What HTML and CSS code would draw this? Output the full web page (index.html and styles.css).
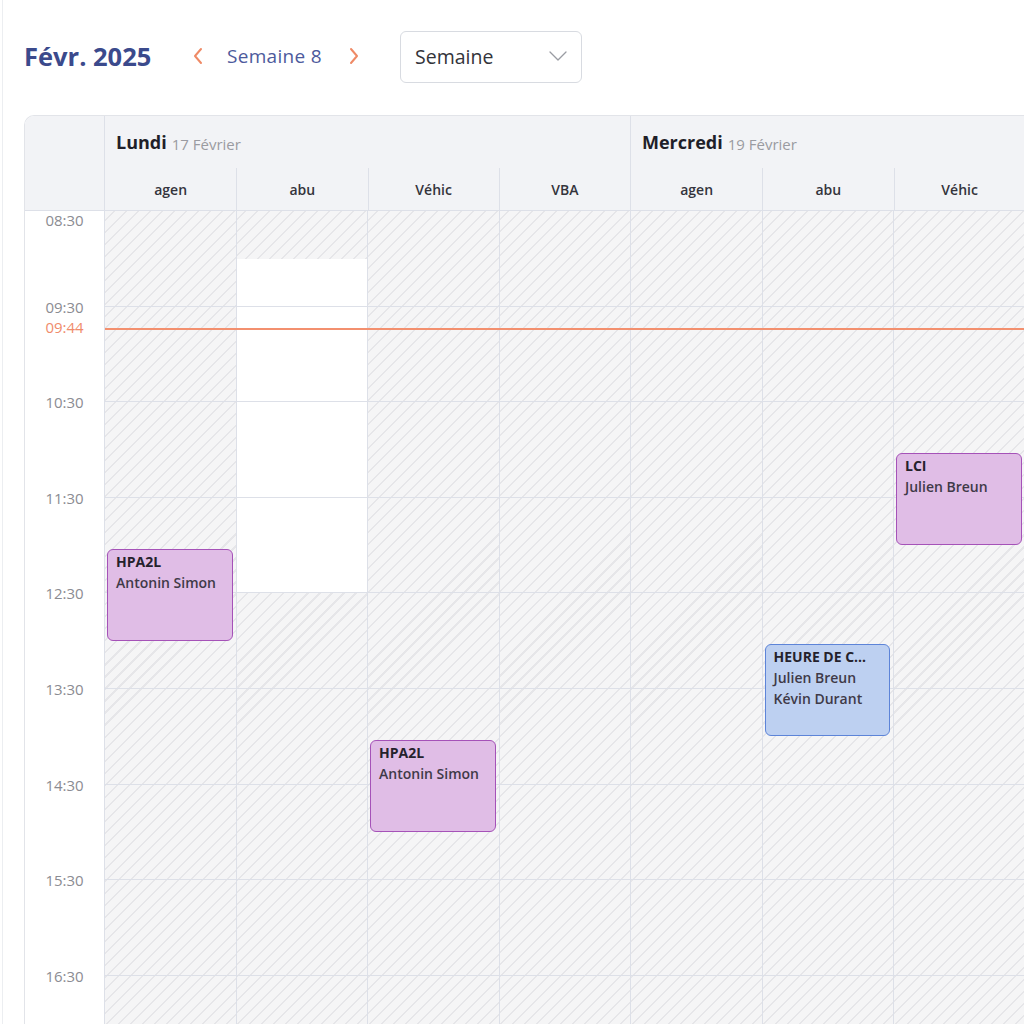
FILE: index.html
```html
<!DOCTYPE html>
<html lang="fr">
<head>
<meta charset="utf-8">
<title>Planning</title>
<link rel="stylesheet" href="styles.css">
</head>
<body>
<div class="app">
  <header class="toolbar">
    <h1 class="month">Févr. 2025</h1>
    <nav class="week-nav">
      <button class="nav-btn" aria-label="Semaine précédente">
        <svg width="12" height="18" viewBox="0 0 12 18"><polyline points="9,2 3,9 9,16" fill="none" stroke="#ef8a66" stroke-width="2" stroke-linecap="round" stroke-linejoin="round"/></svg>
      </button>
      <span class="week-label">Semaine 8</span>
      <button class="nav-btn" aria-label="Semaine suivante">
        <svg width="12" height="18" viewBox="0 0 12 18"><polyline points="3,2 9,9 3,16" fill="none" stroke="#ef8a66" stroke-width="2" stroke-linecap="round" stroke-linejoin="round"/></svg>
      </button>
    </nav>
    <div class="select">
      <span>Semaine</span>
      <svg width="18" height="10" viewBox="0 0 18 10"><polyline points="1,1 9,9 17,1" fill="none" stroke="#9a9ca3" stroke-width="1.3" stroke-linecap="round" stroke-linejoin="round"/></svg>
    </div>
  </header>

  <section class="calendar">
    <div class="cal-head">
      <div class="corner"></div>
      <div class="day-head">
        <div class="day-title"><strong>Lundi</strong> <span>17 Février</span></div>
        <div class="sub-row">
          <div class="sub">agen</div><div class="sub">abu</div><div class="sub">Véhic</div><div class="sub">VBA</div>
        </div>
      </div>
      <div class="day-head">
        <div class="day-title"><strong>Mercredi</strong> <span>19 Février</span></div>
        <div class="sub-row">
          <div class="sub">agen</div><div class="sub">abu</div><div class="sub">Véhic</div><div class="sub"></div>
        </div>
      </div>
    </div>

    <div class="cal-body">
      <div class="times">
        <div class="tslot first"><span class="tlabel">08:30</span></div>
        <div class="tslot"><span class="tlabel">09:30</span></div>
        <div class="tslot"><span class="tlabel">10:30</span></div>
        <div class="tslot"><span class="tlabel">11:30</span></div>
        <div class="tslot"><span class="tlabel">12:30</span></div>
        <div class="tslot"><span class="tlabel">13:30</span></div>
        <div class="tslot"><span class="tlabel">14:30</span></div>
        <div class="tslot"><span class="tlabel">15:30</span></div>
        <div class="tslot"><span class="tlabel">16:30</span></div>
        <span class="now-label">09:44</span>
      </div>

      <!-- Lundi agen -->
      <div class="col">
        <div class="slots"><i></i><i></i><i></i><i></i><i></i><i></i><i></i><i></i><i></i></div>
        <div class="event purple" style="top:337.6px">
          <b>HPA2L</b><span>Antonin Simon</span>
        </div>
      </div>
      <!-- Lundi abu -->
      <div class="col">
        <div class="avail" style="top:47.8px;height:334.6px"></div>
        <div class="slots"><i></i><i></i><i></i><i></i><i></i><i></i><i></i><i></i><i></i></div>
      </div>
      <!-- Lundi Véhic -->
      <div class="col">
        <div class="slots"><i></i><i></i><i></i><i></i><i></i><i></i><i></i><i></i><i></i></div>
        <div class="event purple" style="top:528.8px">
          <b>HPA2L</b><span>Antonin Simon</span>
        </div>
      </div>
      <!-- Lundi VBA -->
      <div class="col">
        <div class="slots"><i></i><i></i><i></i><i></i><i></i><i></i><i></i><i></i><i></i></div>
      </div>
      <!-- Mercredi agen -->
      <div class="col">
        <div class="slots"><i></i><i></i><i></i><i></i><i></i><i></i><i></i><i></i><i></i></div>
      </div>
      <!-- Mercredi abu -->
      <div class="col">
        <div class="slots"><i></i><i></i><i></i><i></i><i></i><i></i><i></i><i></i><i></i></div>
        <div class="event blue" style="top:433.2px">
          <b>HEURE DE C…</b><span>Julien Breun</span><span>Kévin Durant</span>
        </div>
      </div>
      <!-- Mercredi Véhic -->
      <div class="col">
        <div class="slots"><i></i><i></i><i></i><i></i><i></i><i></i><i></i><i></i><i></i></div>
        <div class="event purple" style="top:242px">
          <b>LCI</b><span>Julien Breun</span>
        </div>
      </div>
      <!-- Mercredi (suite) -->
      <div class="col">
        <div class="slots"><i></i><i></i><i></i><i></i><i></i><i></i><i></i><i></i><i></i></div>
      </div>

      <div class="now-line"></div>
    </div>
  </section>
</div>
</body>
</html>
```

FILE: styles.css
```css
* { box-sizing: border-box; }
html, body { margin: 0; padding: 0; background: #fff; }
body {
  font-family: "Open Sans", "Noto Sans", "Liberation Sans", sans-serif;
  color: #2b2b35;
}
.app {
  margin-left: 2px;
  border-left: 1px solid #eceef1;
  padding-left: 21px;
  height: 1024px;
  overflow: hidden;
}

/* toolbar */
.toolbar {
  display: flex;
  align-items: center;
  height: 52px;
  margin-top: 31px;
}
.month {
  margin: 0 0 2px 0;
  font-size: 25.5px;
  font-weight: 700;
  color: #3b4a8c;
  width: 168px;
}
.week-nav {
  display: flex;
  align-items: center;
  width: 208px;
  margin-bottom: 2px;
}
.nav-btn {
  background: none;
  border: 0;
  padding: 0;
  width: 12px;
  height: 18px;
  display: flex;
}
.week-label {
  font-size: 19px;
  font-weight: 500;
  letter-spacing: 0.3px;
  color: #4d5a9c;
  margin: 0 18px 0 23px;
  width: 103px;
  white-space: nowrap;
}
.select {
  width: 182px;
  height: 52px;
  border: 1px solid #d8dbe1;
  border-radius: 6px;
  display: flex;
  align-items: center;
  justify-content: space-between;
  padding: 0 14px 2px 14px;
  font-size: 19.5px;
  font-weight: 500;
  color: #33343a;
}

/* calendar */
.calendar {
  margin-top: 32px;
  width: 1200px;
  border: 1px solid #e2e4e9;
  border-right: 0;
  border-radius: 10px 0 0 0;
  overflow: hidden;
}
.cal-head {
  display: grid;
  grid-template-columns: 80px 526px 526px;
  background: #f2f3f6;
  height: 95px;
  border-bottom: 1px solid #dde0e8;
}
.corner { border-right: 1px solid #dde0e8; }
.day-head {
  border-right: 1px solid #dde0e8;
  display: flex;
  flex-direction: column;
}
.day-title {
  height: 52px;
  display: flex;
  align-items: center;
  padding-left: 11px;
  gap: 5px;
}
.day-title strong { font-size: 18px; font-weight: 700; color: #1f1f29; }
.day-title span { font-size: 15px; color: #9a9ba1; padding-top: 3px; }
.sub-row {
  flex: 1;
  display: grid;
  grid-template-columns: repeat(4, 1fr);
}
.sub {
  display: flex;
  align-items: center;
  justify-content: center;
  font-size: 14px;
  font-weight: 600;
  color: #34343c;
  border-left: 1px solid #dde0e8;
}
.sub:first-child { border-left: 0; }

.cal-body {
  position: relative;
  display: grid;
  grid-template-columns: 80px repeat(8, 131.5px);
}
.times {
  position: relative;
  border-right: 1px solid #dde0e8;
  background: #fff;
}
.tslot {
  height: 95.6px;
  display: flex;
  justify-content: center;
  align-items: flex-start;
}
.tlabel {
  font-size: 15px;
  line-height: 18px;
  color: #8b8c92;
  margin-top: -9px;
}
.tslot.first .tlabel { margin-top: 0; }
.now-label {
  position: absolute;
  left: 0;
  width: 100%;
  top: 107px;
  text-align: center;
  font-size: 15px;
  line-height: 18px;
  color: #f08c6c;
}
.now-line {
  position: absolute;
  left: 80px;
  right: 0;
  top: 117px;
  height: 2px;
  background: #f3906f;
  z-index: 3;
}

.col {
  position: relative;
  border-right: 1px solid #dde0e8;
  background-color: #f4f4f5;
  background-image: repeating-linear-gradient(-45deg, #f5f5f6 0, #f5f5f6 5px, #e6e6e9 5px, #e6e6e9 6.5px, #f5f5f6 6.5px, #f5f5f6 8.5px);
}
.avail {
  position: absolute;
  left: 0;
  right: 0;
  background: #fff;
  z-index: 0;
}
.slots { position: relative; z-index: 1; }
.slots i {
  display: block;
  height: 95.6px;
  border-bottom: 1px solid #dde0e8;
}

.event {
  position: absolute;
  left: 2px;
  right: 3px;
  height: 92px;
  z-index: 2;
  border-radius: 6px;
  padding: 2px 8px;
  display: flex;
  flex-direction: column;
  font-size: 14px;
  line-height: 21px;
  overflow: hidden;
}
.event b {
  font-weight: 700;
  color: #25222c;
  white-space: nowrap;
  line-height: 20px;
}
.event span { font-weight: 600; color: #3f3a48; white-space: nowrap; }
.event.purple { background: #e0bde6; border: 1.5px solid #a552b8; }
.event.blue { background: #bdd0f1; border: 1.5px solid #5d84d8; }
```
